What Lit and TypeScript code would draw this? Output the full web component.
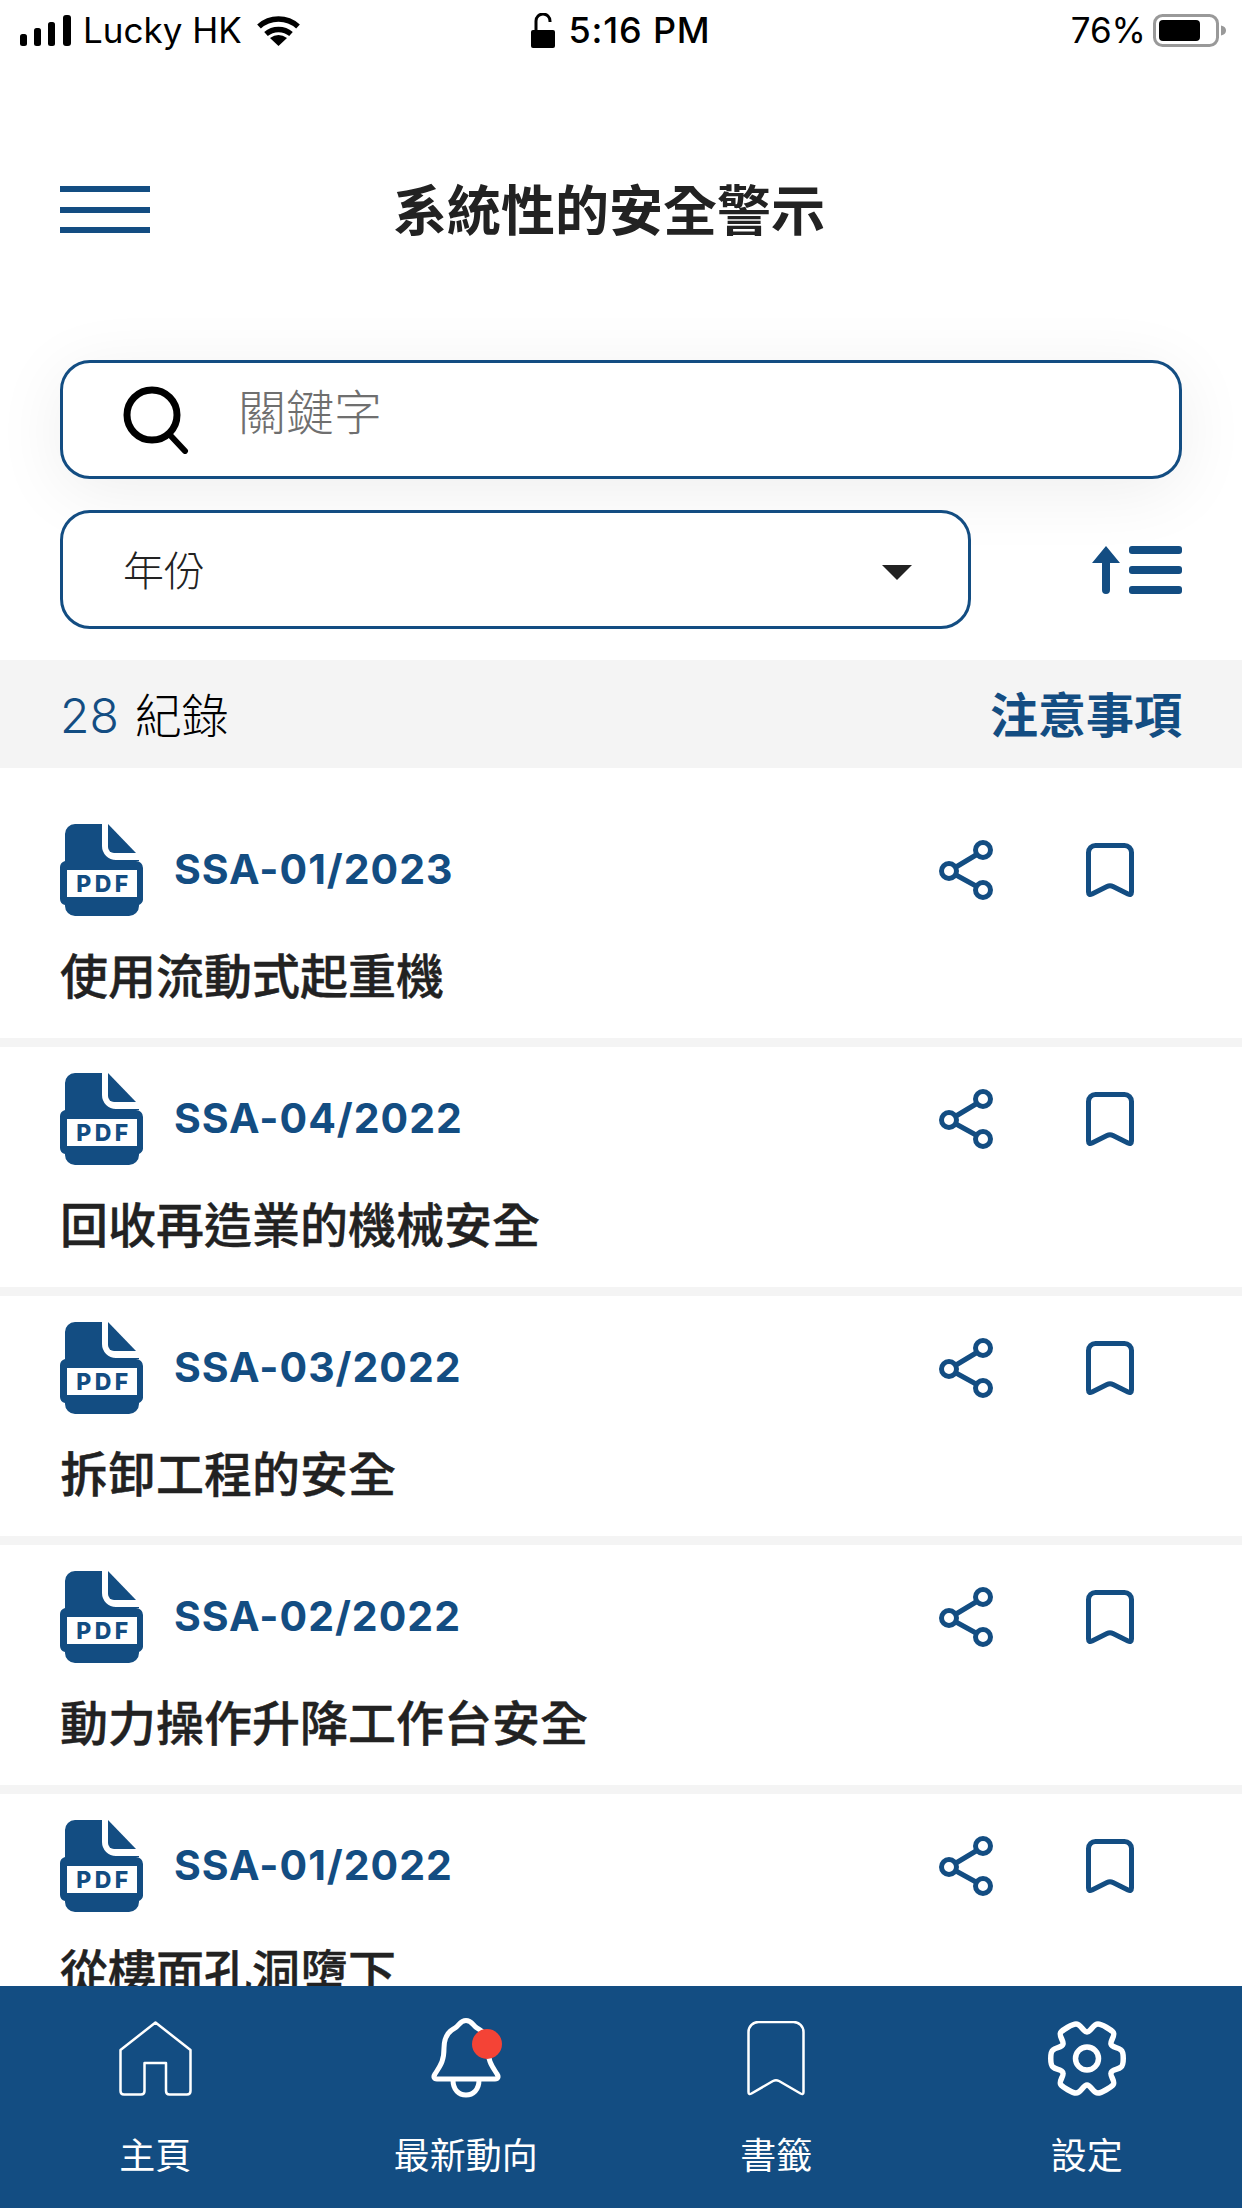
import { LitElement, html, css, svg } from "lit";
import { customElement } from "lit/decorators.js";

const ITEMS = [
  { id: "SSA-01/2023", title: "使用流動式起重機" },
  { id: "SSA-04/2022", title: "回收再造業的機械安全" },
  { id: "SSA-03/2022", title: "拆卸工程的安全" },
  { id: "SSA-02/2022", title: "動力操作升降工作台安全" },
  { id: "SSA-01/2022", title: "從樓面孔洞墮下" },
];

const pdfIcon = svg`<svg class="pdf" width="83" height="92" viewBox="0 0 83 92">
  <path fill="#134d82" d="M5 10a10 10 0 0 1 10-10H42V22a14 14 0 0 0 14 14H79V37H76a7 7 0 0 1 7 7V74a7 7 0 0 1-4 7V82a10 10 0 0 1-10 10H15A10 10 0 0 1 5 82V81a7 7 0 0 1-5-7V44a7 7 0 0 1 5-7Z"/>
  <path fill="#134d82" d="M48 0L76 29H54a6 6 0 0 1-6-6Z"/>
  <rect x="7" y="46" width="70" height="27" fill="#fff"/>
  <text x="44" y="68" text-anchor="middle" class="pdf-text">PDF</text>
</svg>`;

const shareIcon = svg`<svg class="share" width="56" height="60" viewBox="0 0 56 60" fill="none" stroke="#134d82" stroke-width="5">
  <circle cx="45" cy="10" r="7.5"/><circle cx="11" cy="31" r="7.5"/><circle cx="45" cy="50" r="7.5"/>
  <path d="M18 27L38 15M18 35L38 46"/>
</svg>`;

const bookmarkIcon = svg`<svg width="48" height="54" viewBox="0 0 48 54" fill="none" stroke="#134d82" stroke-width="5" stroke-linejoin="round">
  <path d="M2.5 9.5a7 7 0 0 1 7-7h29a7 7 0 0 1 7 7V49q0 3.5-3.5 2L27 43.5q-3-1.5-6 0L6 51q-3.5 1.500-3.500-2Z"/>
</svg>`;

const homeIcon = svg`<svg width="73" height="75" viewBox="0 0 73 75" fill="none" stroke="#fff" stroke-width="2.500" stroke-linejoin="round">
  <path d="M36.500 1.500L71.500 29V70q0 3.500-3.500 3.500H50.500q-3.500 0-3.500-3.500V42H25.500V70q0 3.500-3.500 3.500H5q-3.500 0-3.500-3.500V29Z"/>
</svg>`;

const bellIcon = svg`<svg width="70" height="80" viewBox="0 0 70 80" fill="none" stroke="#fff" stroke-width="5" stroke-linejoin="round">
  <path d="M35 2.500C29 2.500 28 8 24 10C16 14 13 20 13 30C13 44 9 48 4 56C2 59 3 61 6 61H64C67 61 68 59 66 56C61 48 57 44 57 30C57 20 54 14 46 10C42 8 41 2.500 35 2.500Z"/>
  <path d="M22 62C22 72 28 77 35 77C42 77 48 72 48 62"/>
</svg>`;

const navBookmarkIcon = svg`<svg width="58" height="75" viewBox="0 0 58 75" fill="none" stroke="#fff" stroke-width="2.500" stroke-linejoin="round">
  <path d="M1.500 11a10 10 0 0 1 10-10H46.500a10 10 0 0 1 10 10V71q0 3-3 1.500L32 60q-3-1.500-6 0L4.500 72.500q-3 1.500-3-1.500Z"/>
</svg>`;

const gearIcon = svg`<svg width="80" height="75" viewBox="0 0 80 75" fill="none" stroke="#fff" stroke-width="5.500" stroke-linejoin="round">
  <path d="M40 11C44 11 46 3 51 3C55 3 64 9 66 11C69 14 63 20 64 23C65 27 71 26 74 29C77 31 77 44 74 46C71 49 65 48 64 52C63 55 69 61 66 64C64 66 55 72 51 72C46 72 44 64 40 64C36 64 34 72 29 72C25 72 16 66 14 64C11 61 17 55 16 52C15 48 9 49 6 46C3 44 3 31 6 29C9 26 15 27 16 23C17 20 11 14 14 11C16 9 25 3 29 3C34 3 36 11 40 11Z"/>
  <circle cx="40" cy="37.500" r="11.500"/>
</svg>`;

@customElement("app-root")
export class AppRoot extends LitElement {
  static styles = css`
    :host {
      display: block;
      width: 1242px;
      height: 2208px;
      background: #fff;
      font-family: Inter, "Noto Sans CJK TC", "Liberation Sans", sans-serif;
      color: #222;
      overflow: hidden;
    }
    .page { display: flex; flex-direction: column; height: 2208px; }
    .status {
      display: grid;
      grid-template-columns: 1fr auto 1fr;
      align-items: center;
      height: 60px;
      padding: 0 16px 0 20px;
      box-sizing: border-box;
      font-size: 35px;
      color: #000;
      flex: none;
    }
    .st-left, .st-center, .st-right { display: flex; align-items: center; }
    .st-left { gap: 12px; }
    .st-center { gap: 14px; font-size: 36px; font-weight: 500; letter-spacing: 0.800px; margin-left: -5px; }
    .st-right { justify-content: flex-end; gap: 7px; }
    .st-text { line-height: 60px; }
    .header {
      display: flex;
      align-items: flex-start;
      padding: 126px 0 0 60px;
      flex: none;
      height: 300px;
      box-sizing: border-box;
    }
    .burger { display: flex; flex-direction: column; gap: 14.500px; width: 90px; flex: none; }
    .burger i { display: block; height: 6px; background: #134d82; }
    .title {
      margin-left: 243px;
      margin-top: -12px;
      font-size: 54px;
      line-height: 76px;
      font-weight: 700;
      color: #222;
      white-space: nowrap;
    }
    .filters { padding: 0 60px; flex: none; display: flex; flex-direction: column; gap: 31px; height: 300px; box-sizing: border-box; }
    .field {
      box-sizing: border-box;
      height: 119px;
      border: 3px solid #134d82;
      border-radius: 30px;
      background: #fff;
      display: flex;
      align-items: center;
    }
    .search {
      padding-left: 60px;
      gap: 49px;
      box-shadow: 0 12px 70px rgba(0, 0, 0, 0.07);
    }
    .placeholder { font-size: 48px; line-height: 60px; color: #6f6f6f; margin-top: -14px; font-weight: 300; }
    .row2 { display: flex; align-items: center; justify-content: space-between; }
    .select {
      width: 911px;
      padding: 0 56px 0 60px;
      justify-content: space-between;
      font-size: 41px;
      color: #222;
      font-weight: 300;
    }
    .select-label { margin-top: -3px; }
    .caret { width: 0; height: 0; border-left: 15px solid transparent; border-right: 15px solid transparent; border-top: 15px solid #222; margin-top: 6px; }
    .strip {
      flex: none;
      height: 108px;
      background: #f4f4f4;
      display: flex;
      align-items: center;
      justify-content: space-between;
      padding: 0 60px 4px 60px;
      box-sizing: border-box;
    }
    .count { font-size: 47px; color: #000; font-weight: 300; display: flex; gap: 16px; align-items: baseline; }
    .count b { font-weight: 300; font-size: 48px; color: #134d82; }
    .notice { font-size: 48px; font-weight: 700; color: #134d82; }
    .list { flex: 1; min-height: 0; overflow: hidden; background: #f4f4f4; display: flex; flex-direction: column; gap: 9px; }
    .item { background: #fff; padding: 26px 108px 31px 60px; flex: none; }
    .item:first-child { padding-top: 56px; }
    .item-top { display: flex; align-items: center; }
    .pdf { flex: none; }
    .pdf-text { font: 800 23px Inter, sans-serif; letter-spacing: 3.500px; fill: #134d82; }
    .id { margin-left: 31px; font-size: 41px; font-weight: 650; letter-spacing: 1px; color: #134d82; flex: 1; margin-top: -2px; }
    .share { margin-right: 92px; }
    .item-title { margin-top: 31px; font-size: 48px; line-height: 60px; font-weight: 500; color: #222; white-space: nowrap; -webkit-text-stroke: 0.4px #222; }
    .nav {
      flex: none;
      height: 222px;
      background: #134d82;
      display: grid;
      grid-template-columns: repeat(4, 1fr);
      color: #fff;
      position: relative;
    }
    .tab { display: flex; flex-direction: column; align-items: center; padding-top: 32px; position: relative; }
    .tab-icon { height: 80px; display: flex; align-items: center; position: relative; }
    .tab-label { margin-top: 33px; font-size: 36px; line-height: 50px; font-weight: 400; }
    .dot { position: absolute; width: 30px; height: 30px; border-radius: 50%; background: #f44336; left: 41px; top: 11px; }
  `;

  render() {
    return html`<div class="page">
      <div class="status">
        <div class="st-left">
          <svg width="51" height="31" viewBox="0 0 51 31" fill="#000">
            <rect x="0" y="19" width="7" height="12" rx="2.500"/><rect x="14" y="13" width="7" height="18" rx="2.500"/>
            <rect x="28" y="7" width="7" height="24" rx="2.500"/><rect x="43" y="0" width="8" height="31" rx="3"/>
          </svg>
          <span class="st-text">Lucky HK</span>
          <svg width="45" height="31" viewBox="0 0 45 31" style="margin-left:2px">
            <path d="M3 11.500C14 1.500 31 1.500 42 11.500M10 19C17 13 28 13 35 19" fill="none" stroke="#000" stroke-width="5.500"/>
            <path d="M22.500 31L14 23Q22.500 17 31 23Z" fill="#000"/>
          </svg>
        </div>
        <div class="st-center">
          <svg width="24" height="35" viewBox="0 0 24 35">
            <path d="M5 17V8a6.500 6.500 0 0 1 14 0V9" fill="none" stroke="#000" stroke-width="3"/>
            <rect x="0" y="17" width="24" height="18" rx="2" fill="#000"/>
          </svg>
          <span class="st-text">5:16 PM</span>
        </div>
        <div class="st-right">
          <span class="st-text">76%</span>
          <svg width="73" height="33" viewBox="0 0 73 33">
            <rect x="1.500" y="1.500" width="63" height="30" rx="8" fill="none" stroke="#999" stroke-width="3"/>
            <rect x="6" y="6" width="41" height="21" rx="4" fill="#000"/>
            <path d="M68 11.500q5 1 5 5t-5 5Z" fill="#999"/>
          </svg>
        </div>
      </div>

      <div class="header">
        <div class="burger"><i></i><i></i><i></i></div>
        <div class="title">系統性的安全警示</div>
      </div>

      <div class="filters">
        <div class="field search">
          <svg width="66" height="68" viewBox="0 0 66 68" fill="none" stroke="#000" stroke-width="7">
            <circle cx="29" cy="29" r="25"/>
            <path d="M47 49L62 65" stroke-linecap="round" stroke-width="6"/>
          </svg>
          <div class="placeholder">關鍵字</div>
        </div>
        <div class="row2">
          <div class="field select"><span class="select-label">年份</span><span class="caret"></span></div>
          <svg width="90" height="48" viewBox="0 0 90 48" fill="#134d82">
            <path d="M14 0L28 17H18V44a4 4 0 0 1-8 0V17H0Z"/>
            <rect x="37" y="0" width="53" height="8" rx="3"/>
            <rect x="37" y="20" width="53" height="8" rx="3"/>
            <rect x="37" y="40" width="53" height="8" rx="3"/>
          </svg>
        </div>
      </div>

      <div class="strip">
        <div class="count"><b>28</b><span>紀錄</span></div>
        <div class="notice">注意事項</div>
      </div>

      <div class="list">
        ${ITEMS.map(
          (it) => html`<div class="item">
            <div class="item-top">
              ${pdfIcon}
              <div class="id">${it.id}</div>
              ${shareIcon}
              ${bookmarkIcon}
            </div>
            <div class="item-title">${it.title}</div>
          </div>`
        )}
      </div>

      <div class="nav">
        <div class="tab"><div class="tab-icon">${homeIcon}</div><div class="tab-label">主頁</div></div>
        <div class="tab"><div class="tab-icon">${bellIcon}<span class="dot"></span></div><div class="tab-label">最新動向</div></div>
        <div class="tab"><div class="tab-icon">${navBookmarkIcon}</div><div class="tab-label">書籤</div></div>
        <div class="tab"><div class="tab-icon">${gearIcon}</div><div class="tab-label">設定</div></div>
      </div>
    </div>`;
  }
}
